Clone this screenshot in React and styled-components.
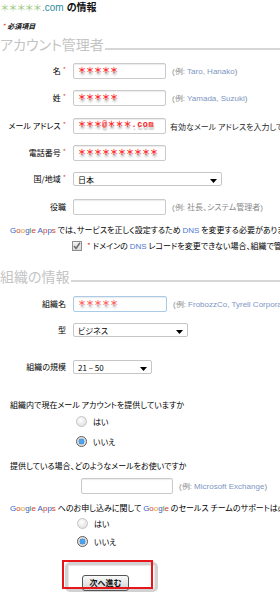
import React from "react";
import styled, { createGlobalStyle } from "styled-components";

const GlobalStyle = createGlobalStyle`
  html, body {
    margin: 0;
    padding: 0;
    background: #ffffff;
    width: 280px;
    height: 600px;
    overflow: hidden;
  }
  body {
    font-family: "Noto Sans CJK JP", "Liberation Sans", sans-serif;
    font-feature-settings: "palt";
    color: #111;
  }
`;

const Page = styled.div`
  width: 640px;
  display: flex;
  flex-direction: column;
`;

const Title = styled.div`
  height: 14px;
  line-height: 14px;
  font-size: 10px;
  font-weight: 700;
  white-space: nowrap;
`;

const Stars = styled.span`
  color: #9cc77c;
  font-feature-settings: normal;
  font-size: 9.5px;
  font-weight: 400;
  letter-spacing: -1.3px;
`;

const Domain = styled.span`
  color: #2f8a9e;
  font-family: "Liberation Sans", sans-serif;
  font-weight: 400;
  margin-left: 1px;
  margin-right: 3px;
`;

const Note = styled.div`
  margin-top: 7px;
  height: 10px;
  line-height: 10px;
  font-size: 7px;
  font-style: italic;
  font-weight: 700;
  padding-left: 2px;
`;

const Red = styled.span`
  color: #e23a2e;
  margin-right: 2px;
  font-weight: 400;
`;

const SectionHeading = styled.div`
  display: flex;
  height: 16px;
  margin-top: ${(p) => p.$mt}px;
  font-size: 14px;
  line-height: 16px;
  color: #c4c4c4;
  white-space: nowrap;
  &::after {
    content: "";
    flex: 1;
    align-self: flex-end;
    margin-bottom: 2px;
    margin-left: 1px;
    border-top: 2px solid #d6d6d6;
  }
`;

const FieldRow = styled.div`
  display: grid;
  grid-template-columns: 66px max-content max-content;
  align-items: center;
  margin-top: ${(p) => p.$mt}px;
  white-space: nowrap;
`;

const Label = styled.div`
  text-align: right;
  font-size: 8px;
  line-height: 12px;
  color: #000;
`;

const Req = styled.span`
  color: #e0504a;
  font-size: 7px;
  vertical-align: top;
  line-height: 8px;
  margin-left: 2px;
`;

const TextBox = styled.div`
  box-sizing: border-box;
  width: ${(p) => p.$w}px;
  height: 16px;
  margin-left: ${(p) => (p.$ml == null ? 7 : p.$ml)}px;
  border: 1px solid ${(p) => (p.$focus ? "#a9cbe8" : "#cacaca")};
  border-radius: 2px;
  box-shadow: inset 0 1px 1px #ececec;
  background: #fff;
  display: flex;
  align-items: center;
  padding-left: 4px;
  overflow: hidden;
`;

const Masked = styled.span`
  font-size: 8px;
  line-height: 10px;
  font-feature-settings: normal;
  color: #ff2222;
  font-weight: 700;
  opacity: ${(p) => (p.$light ? 0.75 : 1)};
  text-shadow: 0.5px 3px 1px #bdbdbd;
  margin-top: -3px;
  white-space: nowrap;
`;

const MaskedLatin = styled.span`
  font-family: "Liberation Mono", monospace;
  font-size: 8.5px;
  letter-spacing: 0.5px;
`;

const SelectBox = styled.div`
  box-sizing: border-box;
  width: ${(p) => p.$w}px;
  height: 14px;
  margin-left: 7px;
  border: 1px solid #c6c6c6;
  border-radius: 2px;
  background: #fff;
  display: flex;
  align-items: center;
  justify-content: space-between;
  padding: 0 4px 0 4px;
  font-size: 8px;
  color: #000;
`;

const Arrow = styled.svg`
  width: 7px;
  height: 4px;
  margin-top: 3px;
`;

const Hint = styled.span`
  margin-left: 6px;
  font-family: "Liberation Sans", sans-serif;
  font-size: 8px;
  color: #8a8a8a;
`;

const HintEx = styled.span`
  color: #7d96c4;
`;

const HintJa = styled.span`
  font-family: "Noto Sans CJK JP", sans-serif;
  color: #8a8a8a;
`;

const HintDark = styled.span`
  margin-left: 4px;
  font-size: 8px;
  color: #2a2a2a;
`;

const Sentence = styled.div`
  margin-top: ${(p) => p.$mt}px;
  padding-left: ${(p) => p.$pl || 10}px;
  height: 12px;
  line-height: 12px;
  font-size: 8px;
  color: #000;
  white-space: nowrap;
`;

const G = styled.span`
  font-family: "Liberation Sans", sans-serif;
  font-size: 8px;
  color: ${(p) => p.$c};
`;

const Dns = styled.span`
  font-family: "Liberation Sans", sans-serif;
  font-size: 8px;
  color: #4a78d0;
`;

const CheckBox = styled.span`
  box-sizing: border-box;
  width: 10px;
  height: 10px;
  border: 1px solid #8e8e8e;
  background: linear-gradient(#f2f2f2, #dadada);
  display: inline-flex;
  align-items: center;
  justify-content: center;
  vertical-align: -1px;
  margin-right: 5px;
`;

const RadioRow = styled.div`
  display: flex;
  align-items: center;
  height: ${(p) => p.$h}px;
  padding-left: ${(p) => p.$pl}px;
  font-size: 8px;
  color: #000;
`;

const Radio = styled.span`
  box-sizing: border-box;
  width: 11px;
  height: 11px;
  border-radius: 50%;
  border: 1px solid ${(p) => (p.$on ? "#5a5a5a" : "#c4c4c4")};
  background: ${(p) =>
    p.$on
      ? "radial-gradient(circle, #4aa3f0 0 2.2px, #1d5fa8 2.6px, #dcdcdc 3.2px, #f4f4f4 100%)"
      : "radial-gradient(circle at 40% 35%, #ffffff, #d8d8d8)"};
  margin-right: 6px;
`;

const ButtonArea = styled.div`
  position: relative;
  margin-top: 12px;
  margin-left: 65px;
  width: 93px;
  height: 30px;
`;

const ButtonFrame = styled.div`
  box-sizing: border-box;
  width: 93px;
  height: 30px;
  border: 3px solid #d2d2d2;
  border-radius: 5px;
  box-shadow: inset 0 0 0 1px #e8e8e8;
  padding: 2px 0 0 14px;
`;

const NextButton = styled.button`
  box-sizing: border-box;
  width: 47px;
  height: 16px;
  padding: 0;
  border: 1px solid #555;
  border-radius: 3px;
  background: linear-gradient(#fafafa, #d2d2d2);
  font-family: "Noto Sans CJK JP", sans-serif;
  font-feature-settings: "palt";
  font-size: 8px;
  font-weight: 700;
  color: #111;
  line-height: 12px;
`;

const RedMark = styled.div`
  position: absolute;
  left: -3px;
  top: -2px;
  width: 91px;
  height: 29px;
  box-sizing: border-box;
  border: 2px solid #e8151b;
`;

const DownArrow = () => (
  <Arrow viewBox="0 0 7 4">
    <path d="M0 0 H7 L3.5 4 Z" fill="#000" />
  </Arrow>
);

const Google = () => (
  <>
    <G $c="#3461cc">G</G>
    <G $c="#d6412f">o</G>
    <G $c="#e4a412">o</G>
    <G $c="#3461cc">g</G>
    <G $c="#2e9a48">l</G>
    <G $c="#d6412f">e</G>
  </>
);

const GoogleApps = () => (
  <>
    <Google />
    <G $c="#3461cc"> A</G>
    <G $c="#d6412f">p</G>
    <G $c="#3461cc">p</G>
    <G $c="#d6412f">s</G>
  </>
);

export default function App() {
  return (
    <>
      <GlobalStyle />
      <Page>
        <Title>
          <Stars>＊＊＊＊＊</Stars>
          <Domain>.com</Domain>の情報
        </Title>
        <Note>
          <Red>*</Red>必須項目
        </Note>

        <SectionHeading $mt={5}>アカウント管理者</SectionHeading>

        <FieldRow $mt={11}>
          <Label>
            名<Req>*</Req>
          </Label>
          <TextBox $w={93}>
            <Masked>＊＊＊＊＊</Masked>
          </TextBox>
          <Hint>
            (例: <HintEx>Taro, Hanako</HintEx>)
          </Hint>
        </FieldRow>

        <FieldRow $mt={11}>
          <Label>
            姓<Req>*</Req>
          </Label>
          <TextBox $w={93}>
            <Masked>＊＊＊＊＊</Masked>
          </TextBox>
          <Hint>
            (例: <HintEx>Yamada, Suzuki</HintEx>)
          </Hint>
        </FieldRow>

        <FieldRow $mt={12}>
          <Label>
            メール アドレス<Req>*</Req>
          </Label>
          <TextBox $w={93}>
            <Masked>
              ＊＊＊<MaskedLatin>@</MaskedLatin>＊＊＊<MaskedLatin>.com</MaskedLatin>
            </Masked>
          </TextBox>
          <HintDark>有効なメール アドレスを入力してください</HintDark>
        </FieldRow>

        <FieldRow $mt={11}>
          <Label>
            電話番号<Req>*</Req>
          </Label>
          <TextBox $w={93}>
            <Masked>＊＊＊＊＊＊＊＊＊＊</Masked>
          </TextBox>
        </FieldRow>

        <FieldRow $mt={11}>
          <Label>
            国/地域<Req>*</Req>
          </Label>
          <SelectBox $w={149}>
            <span>日本</span>
            <DownArrow />
          </SelectBox>
        </FieldRow>

        <FieldRow $mt={13}>
          <Label>役職</Label>
          <TextBox $w={93} />
          <Hint>
            (例: <HintJa>社長、システム管理者</HintJa>)
          </Hint>
        </FieldRow>

        <Sentence $mt={9}>
          <GoogleApps /> では、サービスを正しく設定するため <Dns>DNS</Dns> を変更する必要があります。
        </Sentence>

        <Sentence $mt={4} $pl={72}>
          <CheckBox>
            <svg width="8" height="8" viewBox="0 0 8 8">
              <path d="M1 4 L3 6.5 L7 0.8" stroke="#6f6f6f" strokeWidth="1.6" fill="none" />
            </svg>
          </CheckBox>
          <Red>*</Red>ドメインの <Dns>DNS</Dns> レコードを変更できない場合、組織で管理しているアドレスを使用します
        </Sentence>

        <SectionHeading $mt={16}>組織の情報</SectionHeading>

        <FieldRow $mt={12}>
          <Label>組織名</Label>
          <TextBox $w={94} $focus>
            <Masked $light>＊＊＊＊＊</Masked>
          </TextBox>
          <Hint>
            (例: <HintEx>FrobozzCo, Tyrell Corporation</HintEx>)
          </Hint>
        </FieldRow>

        <FieldRow $mt={11}>
          <Label>型</Label>
          <SelectBox $w={115}>
            <span>ビジネス</span>
            <DownArrow />
          </SelectBox>
        </FieldRow>

        <FieldRow $mt={23}>
          <Label>組織の規模</Label>
          <SelectBox $w={79}>
            <span>21 – 50</span>
            <DownArrow />
          </SelectBox>
        </FieldRow>

        <Sentence $mt={25}>組織内で現在メール アカウントを提供していますか</Sentence>
        <RadioRow $h={20} $pl={76}>
          <Radio />
          はい
        </RadioRow>
        <RadioRow $h={20} $pl={76}>
          <Radio $on />
          いいえ
        </RadioRow>

        <Sentence $mt={9}>提供している場合、どのようなメールをお使いですか</Sentence>
        <FieldRow $mt={6}>
          <Label />
          <TextBox $w={92} $ml={15} />
          <Hint>
            (例: <HintEx>Microsoft Exchange</HintEx>)
          </Hint>
        </FieldRow>

        <Sentence $mt={8}>
          <GoogleApps /> へのお申し込みに関して <Google /> のセールス チームのサポートは必要ですか
        </Sentence>
        <RadioRow $h={18} $pl={77}>
          <Radio />
          はい
        </RadioRow>
        <RadioRow $h={18} $pl={77}>
          <Radio $on />
          いいえ
        </RadioRow>

        <ButtonArea>
          <ButtonFrame>
            <NextButton>次へ進む</NextButton>
          </ButtonFrame>
          <RedMark />
        </ButtonArea>
      </Page>
    </>
  );
}
